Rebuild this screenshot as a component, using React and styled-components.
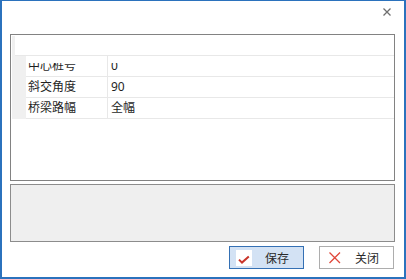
import React from 'react'
import styled, { createGlobalStyle } from 'styled-components'

const Global = createGlobalStyle`
  html, body { margin: 0; padding: 0; background: #fff; }
  * { box-sizing: border-box; }
`

const Window = styled.div`
  width: 406px;
  height: 279px;
  border: 2px solid #2b72bd;
  border-top-width: 1px;
  background: #fff;
  display: flex;
  flex-direction: column;
  font-family: "Noto Sans", "Noto Sans CJK SC", sans-serif;
  font-size: 12px;
  color: #1f1f1f;
`

const TitleBar = styled.div`
  height: 33px;
  display: flex;
  justify-content: flex-end;
  align-items: flex-start;
`

const CloseGlyph = styled.svg`
  margin-top: 7px;
  margin-right: 13px;
`

const Body = styled.div`
  flex: 1;
  display: flex;
  flex-direction: column;
  padding: 0 9px 0 8px;
`

const Grid = styled.div`
  height: 147px;
  border: 1px solid #828282;
  background: #fff;
  overflow: hidden;
  display: flex;
  flex-direction: column;
`

const TopBand = styled.div`
  height: 21px;
  display: flex;
  padding-left: 1px;
`

const TopGutter = styled.div`
  width: 3px;
  margin-top: 1px;
  background: #f0f0f0;
`

const TopFill = styled.div`
  flex: 1;
  border-bottom: 1px solid #e8e8e8;
`

const Row = styled.div`
  height: 21px;
  display: flex;
  padding-left: 1px;
`

const Gutter = styled.div`
  width: 14px;
  background: #f0f0f0;
`

const NameCell = styled.div`
  width: 82px;
  border-right: 1px solid #e8e8e8;
  border-bottom: 1px solid #e8e8e8;
  padding-left: 2px;
`

const ValueCell = styled.div`
  flex: 1;
  border-bottom: 1px solid #e8e8e8;
  padding-left: 3px;
`

const Text = styled.div`
  height: 20px;
  line-height: 20px;
  white-space: nowrap;
  clip-path: ${p => (p.$clipped ? 'inset(7px 0 0 0)' : 'none')};
`

const Notes = styled.div`
  height: 58px;
  margin-top: 3px;
  border: 1px solid #8c8c8c;
  background: #efefef;
`

const Buttons = styled.div`
  margin-top: 4px;
  height: 23px;
  display: flex;
  justify-content: flex-end;
  gap: 15px;
  padding-right: 1px;
`

const Button = styled.button`
  width: 75px;
  height: 23px;
  padding: 0 0 0 6px;
  margin: 0;
  display: flex;
  align-items: center;
  border: 1px solid ${p => (p.$primary ? '#3470b4' : '#adadad')};
  background: ${p => (p.$primary ? '#d3e2f4' : '#fff')};
  font-family: "Noto Sans", "Noto Sans CJK SC", sans-serif;
  font-size: 12px;
  color: #2a2a2a;
`

const IconBox = styled.span`
  width: 16px;
  height: 16px;
  display: flex;
  background: ${p => (p.$white ? '#fff' : 'transparent')};
`

const Label = styled.span`
  flex: 1;
  text-align: center;
  padding-right: 1px;
`

const rows = [
  { name: '中心桩号', value: '0', clipped: true },
  { name: '斜交角度', value: '90' },
  { name: '桥梁路幅', value: '全幅' },
]

export default function App() {
  return (
    <>
      <Global />
      <Window>
        <TitleBar>
          <CloseGlyph width="8" height="8" viewBox="0 0 8 8">
            <path d="M0.5 0.5 L7.5 7.5 M7.5 0.5 L0.5 7.5" stroke="#6f6f6f" strokeWidth="1.3" fill="none" />
          </CloseGlyph>
        </TitleBar>
        <Body>
          <Grid>
            <TopBand>
              <TopGutter />
              <TopFill />
            </TopBand>
            {rows.map(r => (
              <Row key={r.name}>
                <Gutter />
                <NameCell>
                  <Text $clipped={r.clipped}>{r.name}</Text>
                </NameCell>
                <ValueCell>
                  <Text $clipped={r.clipped}>{r.value}</Text>
                </ValueCell>
              </Row>
            ))}
          </Grid>
          <Notes />
          <Buttons>
            <Button $primary>
              <IconBox $white>
                <svg width="16" height="16" viewBox="0 0 16 16">
                  <path d="M3 9.6 L6 12.6 L12.8 6.4" stroke="#c9352b" strokeWidth="2" fill="none" strokeLinejoin="miter" />
                </svg>
              </IconBox>
              <Label>保存</Label>
            </Button>
            <Button>
              <IconBox>
                <svg width="16" height="16" viewBox="0 0 16 16">
                  <path d="M3.5 2.5 L14 13 M14 2.5 L3.5 13" stroke="#e0473a" strokeWidth="1.3" fill="none" />
                </svg>
              </IconBox>
              <Label>关闭</Label>
            </Button>
          </Buttons>
        </Body>
      </Window>
    </>
  )
}
